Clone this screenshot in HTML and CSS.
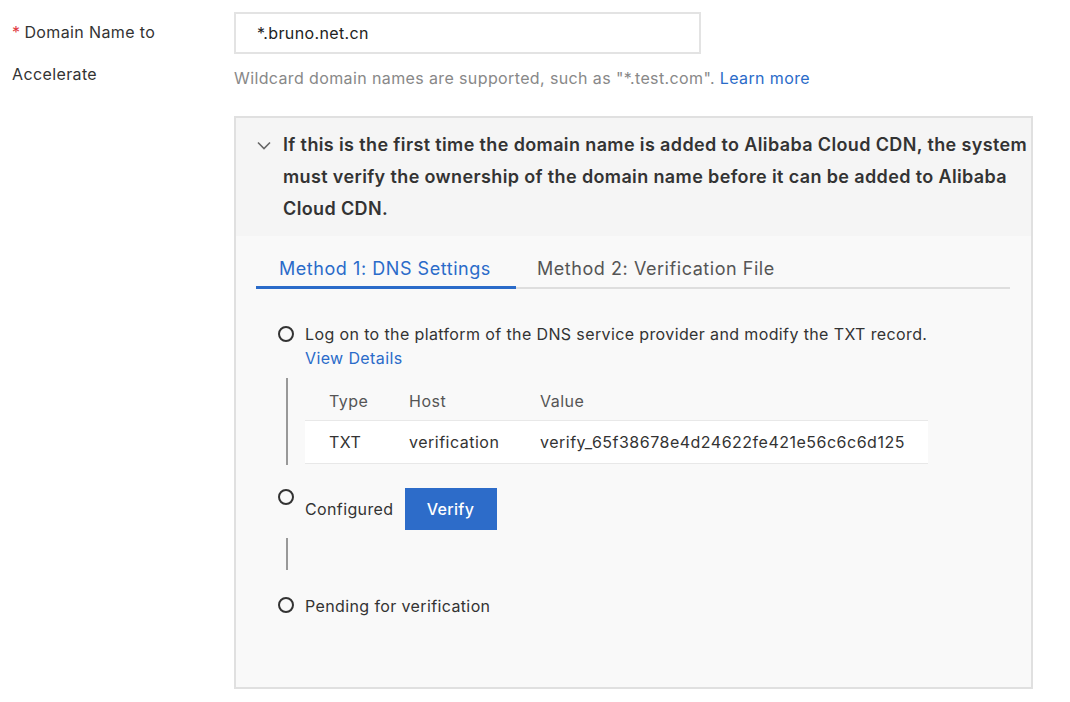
FILE: index.html
```html
<!DOCTYPE html>
<html lang="en">
<head>
<meta charset="utf-8">
<title>Domain Name to Accelerate</title>
<link rel="stylesheet" href="styles.css">
</head>
<body>
<div class="form-row">
  <div class="label required">Domain Name to Accelerate</div>
  <div class="control">
    <div class="input">*.bruno.net.cn</div>
    <div class="help">Wildcard domain names are supported, such as "*.test.com". <a class="link" href="#">Learn more</a></div>
    <div class="panel">
      <div class="panel-head">
        <svg class="chevron" width="14" height="9" viewBox="0 0 14 9"><polyline points="1,1.5 7,7.5 13,1.5" fill="none" stroke="#666" stroke-width="1.6"/></svg>
        <div class="panel-title">If this is the first time the domain name is added to Alibaba Cloud CDN, the system must verify the ownership of the domain name before it can be added to Alibaba Cloud CDN.</div>
      </div>
      <div class="panel-body">
        <div class="tabs">
          <div class="tab active">Method 1: DNS Settings</div>
          <div class="tab">Method 2: Verification File</div>
        </div>
        <div class="steps">
          <div class="step">
            <span class="dot"></span>
            <div class="step-text">Log on to the platform of the DNS service provider and modify the TXT record.<br><a class="link" href="#">View Details</a></div>
          </div>
          <div class="connector table-wrap">
            <table class="records">
              <thead><tr><th class="c-type">Type</th><th class="c-host">Host</th><th>Value</th></tr></thead>
              <tbody><tr><td>TXT</td><td>verification</td><td>verify_65f38678e4d24622fe421e56c6c6d125</td></tr></tbody>
            </table>
          </div>
          <div class="step step-btn">
            <span class="dot"></span>
            <div class="step-text">Configured</div>
            <button class="btn">Verify</button>
          </div>
          <div class="connector short"></div>
          <div class="step step-last">
            <span class="dot"></span>
            <div class="step-text">Pending for verification</div>
          </div>
        </div>
      </div>
    </div>
  </div>
</div>
</body>
</html>
```
FILE: styles.css
```css
* { box-sizing: border-box; }
body {
  margin: 0;
  background: #fff;
  font-family: "Inter", "Liberation Sans", Arial, sans-serif;
  font-size: 16px;
  letter-spacing: 0.38px;
  color: #333;
}
.form-row {
  display: flex;
  padding-top: 12px;
}
.label {
  width: 234px;
  padding-left: 12px;
  padding-right: 60px;
  line-height: 42px;
  margin-top: -1px;
}
.required::before {
  content: "*";
  color: #e0383e;
  margin-right: 4px;
}
.control { width: 799px; }
.input {
  height: 42px;
  width: 467px;
  border: 2px solid #e3e3e3;
  padding-left: 21px;
  line-height: 38px;
  color: #222;
}
.help {
  margin-top: 12px;
  line-height: 24px;
  color: #888;
}
.link { color: #2a6bc9; text-decoration: none; }
.panel {
  margin-top: 26px;
  border: 2px solid #e0e0e0;
  background: #f9f9f9;
}
.panel-head {
  display: flex;
  background: #f5f5f5;
  padding: 11px 0 11px 21px;
}
.chevron { margin-top: 12px; margin-right: 12px; flex: none; }
.panel-title {
  font-weight: 600;
  font-size: 18px;
  letter-spacing: 0.37px;
  line-height: 32px;
  color: #333;
}
.panel-body {
  padding: 15px 21px 69px 20px;
}
.tabs {
  display: flex;
  border-bottom: 2px solid #dedede;
}
.tab {
  padding: 6px 21px 6px 21px;
  line-height: 24px;
  font-size: 18px;
  letter-spacing: 0.55px;
  color: #555;
  margin-bottom: -2px;
  border-bottom: 2px solid transparent;
}
.tab.active {
  color: #2a6bc9;
  border-bottom: 3px solid #2a6bc9;
  padding: 6px 21px 5px 23px;
  width: 260px;
}
.steps { padding: 33px 0 0 22px; }
.step {
  display: flex;
  align-items: flex-start;
}
.dot {
  flex: none;
  width: 16px;
  height: 16px;
  border: 2px solid #333;
  border-radius: 50%;
  margin-top: 4px;
  margin-right: 11px;
}
.step-text { line-height: 24px; }
.connector {
  margin-left: 8px;
  border-left: 2px solid #999;
}
.table-wrap {
  margin-top: 8px;
  padding: 6px 0 1px 17px;
}
.records {
  border-collapse: collapse;
  width: 623px;
  letter-spacing: 0.5px;
}
.records th {
  text-align: left;
  font-weight: normal;
  color: #555;
  height: 36px;
  padding: 0 0 2px 24px;
  border-bottom: 1px solid #e8e8e8;
}
.records td {
  background: #fff;
  height: 43px;
  padding: 0 0 0 24px;
  border-bottom: 1px solid #e8e8e8;
}
.records .c-type { width: 80px; }
.records .c-host { width: 131px; }
.step-btn {
  margin-top: 23px;
  align-items: center;
}
.step-btn .dot { align-self: flex-start; margin-top: 1px; }
.btn {
  margin-left: 11px;
  height: 42px;
  width: 92px;
  padding: 0;
  border: 0;
  background: #2d6cc9;
  color: #fff;
  font-family: inherit;
  font-size: 16px;
  font-weight: 500;
  letter-spacing: 0.3px;
}
.short {
  margin-top: 8px;
  height: 32px;
}
.step-last { margin-top: 24px; }
.step-last .dot { margin-top: 3px; }
```
